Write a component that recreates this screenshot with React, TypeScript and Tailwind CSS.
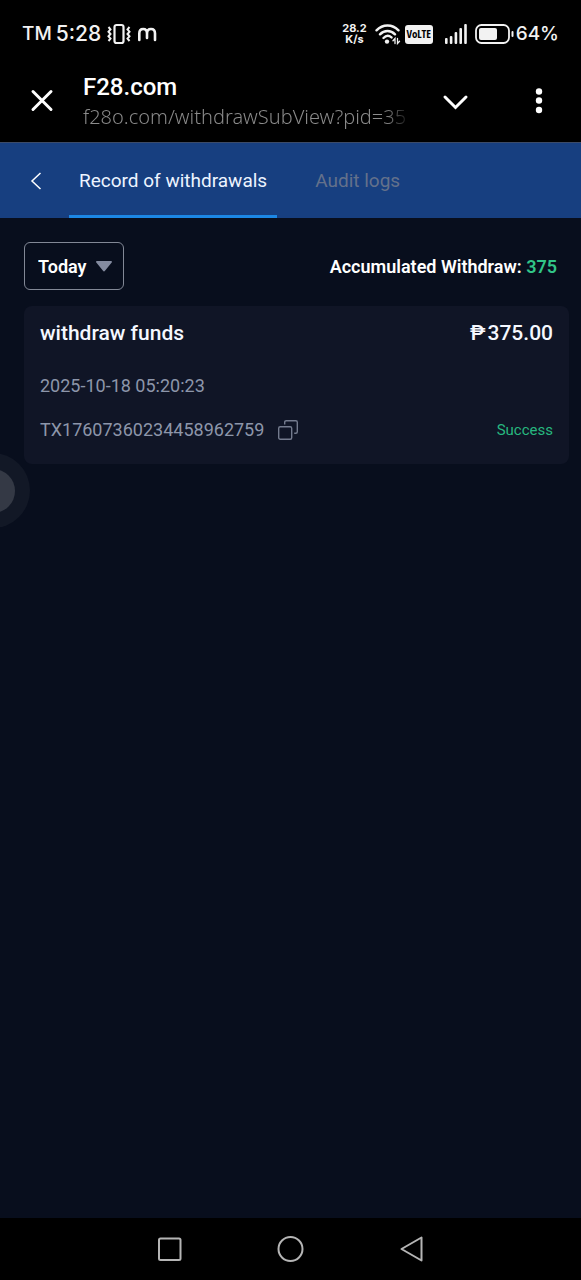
import React from "react";

function StatusBar() {
  return (
    <div className="flex h-[68px] shrink-0 items-center justify-between px-[22px] font-[Inter,sans-serif] text-[#f2f2f2]">
      <div className="flex items-center">
        <span className="text-[19px] leading-6 font-medium">TM</span>
        <span className="ml-1 text-[21px] leading-6 font-medium">5:28</span>
        <svg className="ml-1 h-[22px] w-7" viewBox="0 0 28 22" fill="none" stroke="currentColor" aria-hidden="true">
          <rect x="9.500" y="2" width="9" height="18" rx="2" strokeWidth="2.200" />
          <path d="M3.500 4l2 2.400-2 2.300 2 2.300-2 2.300 2 2.300-2 2.400M24.500 4l-2 2.400 2 2.300-2 2.300 2 2.300-2 2.300 2 2.400" strokeWidth="2" />
        </svg>
        <svg className="ml-1 h-4 w-5" viewBox="0 0 20 16" fill="none" stroke="currentColor" strokeWidth="2.600" strokeLinecap="round" aria-hidden="true">
          <path d="M2.300 14V7.500C2.300 4.600 4 3 6.200 3S10 4.600 10 7.500V12M10 7.500C10 4.600 11.800 3 14 3s4 1.600 4 4.500V14" />
        </svg>
      </div>
      <div className="flex items-center">
        <div className="flex flex-col items-center text-[11px] leading-[11px] font-bold">
          <span>28.2</span>
          <span>K/s</span>
        </div>
        <svg className="ml-2 h-[22px] w-[26px]" viewBox="0 0 26 22" fill="none" stroke="currentColor" strokeWidth="2.400" strokeLinecap="round" aria-hidden="true">
          <path d="M1.500 7.300c6.200-6.500 15.800-6.500 22 0M5 11.300c4.200-4.400 10.800-4.400 15 0M8.500 15c2.400-2.500 5.600-2.600 8-.6" />
          <circle cx="12" cy="18.600" r="2.200" fill="currentColor" stroke="none" />
          <path d="M20 20.500v-5l-2 2.200M22.500 15.500v5l2-2.200" strokeWidth="1.300" />
        </svg>
        <span className="ml-1 flex h-[19px] w-7 items-center justify-center rounded-[3px] bg-[#f2f2f2] font-['Open_Sans_Condensed','Roboto_Condensed',Roboto,sans-serif] text-[11px] leading-3 font-extrabold text-black">
          VoLTE
        </span>
        <svg className="ml-3 h-5 w-[22px]" viewBox="0 0 22 20" fill="currentColor" aria-hidden="true">
          <rect y="14" width="2.600" height="6" rx="1" />
          <rect x="4.800" y="12" width="2.600" height="8" rx="1" />
          <rect x="9.600" y="8" width="2.600" height="12" rx="1" />
          <rect x="14.400" y="4" width="2.600" height="16" rx="1" />
          <rect x="19.200" width="2.600" height="20" rx="1" />
        </svg>
        <svg className="ml-2 h-5 w-[39px]" viewBox="0 0 39 20" fill="none" aria-hidden="true">
          <rect x="1" y="1" width="33" height="18" rx="5.500" stroke="currentColor" strokeWidth="1.800" />
          <rect x="4" y="4" width="18" height="12" rx="2" fill="currentColor" />
          <rect x="36.500" y="7" width="2" height="6" rx="1" fill="currentColor" />
        </svg>
        <span className="ml-0.5 text-[19px] leading-6 font-medium">64%</span>
      </div>
    </div>
  );
}

function BrowserBar() {
  return (
    <header className="flex h-[74px] shrink-0 items-center pb-2 text-white">
      <button type="button" aria-label="Close" className="ml-7 flex size-7 items-center justify-center">
        <svg className="size-6" viewBox="0 0 24 24" fill="none" stroke="currentColor" strokeWidth="3" strokeLinecap="round">
          <path d="M3 2.500l18 18M21 2.500l-18 18" />
        </svg>
      </button>
      <div className="ml-[27px] min-w-0 flex-1">
        <h1 className="text-[24px] leading-8 font-medium">F28.com</h1>
        <p className="overflow-hidden bg-linear-to-r from-[#8c8c8c] from-92% to-transparent bg-clip-text font-['Noto_Sans',sans-serif] text-[20px] leading-7 font-light whitespace-nowrap text-transparent">
          f28o.com/withdrawSubView?pid=35
        </p>
      </div>
      <button type="button" aria-label="Expand" className="ml-7 flex size-8 items-center justify-center">
        <svg className="size-7" viewBox="0 0 28 28" fill="none" stroke="currentColor" strokeWidth="3" strokeLinecap="round">
          <path d="M4 10l10.500 10.500L25 10" />
        </svg>
      </button>
      <button type="button" aria-label="More" className="mr-7 ml-[54px] flex size-7 items-center justify-center">
        <svg className="h-7 w-2" viewBox="0 0 8 28" fill="currentColor">
          <circle cx="4" cy="4.500" r="3.200" />
          <circle cx="4" cy="13.500" r="3.200" />
          <circle cx="4" cy="23" r="3.200" />
        </svg>
      </button>
    </header>
  );
}

function Tabs() {
  return (
    <nav className="flex h-[76px] shrink-0 items-stretch border-t border-[#3c4b68] bg-[#173f80] text-[19px]">
      <button type="button" aria-label="Back" className="ml-6 flex w-6 items-center justify-center text-white">
        <svg className="h-[18px] w-3" viewBox="0 0 12 18" fill="none" stroke="currentColor" strokeWidth="1.500">
          <path d="M10.500 1L2 9l8.500 8" />
        </svg>
      </button>
      <a href="#withdrawals" aria-current="page" className="ml-[21px] flex items-center border-b-3 border-[#1c87e5] px-[10px] pt-1 text-[#edf4ff]">
        Record of withdrawals
      </a>
      <a href="#audit" className="ml-7 flex items-center px-[10px] pt-px text-[#64718b]">
        Audit logs
      </a>
    </nav>
  );
}

function RecordCard() {
  return (
    <article className="mt-4 mr-3 ml-6 rounded-lg bg-[#101526] px-4 pt-[11px] pb-5 text-[#8d96aa]">
      <div className="flex items-center justify-between text-[21px] leading-8 font-medium text-[#f5f8ff]">
        <h2>withdraw funds</h2>
        <span className="flex gap-0.5">
          <span>₱</span>
          <span>375.00</span>
        </span>
      </div>
      <p className="mt-[23px] text-[18px] leading-7">2025-10-18 05:20:23</p>
      <div className="mt-4 flex items-center justify-between">
        <div className="flex items-center gap-[14px]">
          <span className="text-[18px] leading-7">TX17607360234458962759</span>
          <button type="button" aria-label="Copy transaction number">
            <svg className="size-5" viewBox="0 0 20 20" fill="none" stroke="#747b8e" strokeWidth="1.400">
              <rect x=".7" y="6.700" width="13" height="12.600" rx="1.500" />
              <path d="M6.700 4.500V2.200c0-.9.600-1.500 1.500-1.500h9.600c.9 0 1.500.6 1.500 1.500v9.600c0 .9-.6 1.500-1.500 1.500h-1.600" />
            </svg>
          </button>
        </div>
        <span className="text-[15px] leading-7 text-[#27b77f]">Success</span>
      </div>
    </article>
  );
}

function SystemNav() {
  return (
    <footer className="flex h-[62px] shrink-0 items-center justify-center gap-[93px] bg-black text-[#b5b5b5]">
      <button type="button" aria-label="Recent apps">
        <svg className="size-7" viewBox="0 0 28 28" fill="none" stroke="currentColor" strokeWidth="2">
          <rect x="3" y="3.500" width="21.500" height="21.500" rx="1.500" />
        </svg>
      </button>
      <button type="button" aria-label="Home">
        <svg className="size-7" viewBox="0 0 28 28" fill="none" stroke="currentColor" strokeWidth="2">
          <circle cx="13.500" cy="14" r="12" />
        </svg>
      </button>
      <button type="button" aria-label="Go back">
        <svg className="size-7" viewBox="0 0 28 28" fill="none" stroke="currentColor" strokeWidth="2" strokeLinejoin="round">
          <path d="M23.500 2.500v23L3.500 14z" />
        </svg>
      </button>
    </footer>
  );
}

export default function App() {
  return (
    <div className="relative flex min-h-screen flex-col overflow-x-hidden bg-black font-[Roboto,sans-serif]">
      <StatusBar />
      <BrowserBar />
      <Tabs />
      <main className="flex-1 bg-[#080e1d] pt-6">
        <div className="flex items-center justify-between px-6 text-[18px] font-semibold text-white">
          <div className="relative">
            <select aria-label="Period" className="h-12 w-[100px] appearance-none rounded-md border border-[#828896] bg-transparent pl-[13px] outline-none">
              <option>Today</option>
              <option>Yesterday</option>
            </select>
            <svg className="pointer-events-none absolute top-[19px] right-3 h-[11px] w-4" viewBox="0 0 16 11" fill="#848ba0" aria-hidden="true">
              <path d="M1 0h14c1 0 1.300.8.7 1.500L9 9.800c-.6.800-1.400.8-2 0L.3 1.500C-.3.8 0 0 1 0z" />
            </svg>
          </div>
          <p>
            Accumulated Withdraw: <span className="text-[#31c588]">375</span>
          </p>
        </div>
        <RecordCard />
      </main>
      <button type="button" aria-label="Floating shortcut" className="absolute top-[453px] left-[-45px] flex size-[75px] items-center justify-center rounded-full bg-[#121826]">
        <span className="size-11 rounded-full bg-[#343945]" />
      </button>
      <SystemNav />
    </div>
  );
}
